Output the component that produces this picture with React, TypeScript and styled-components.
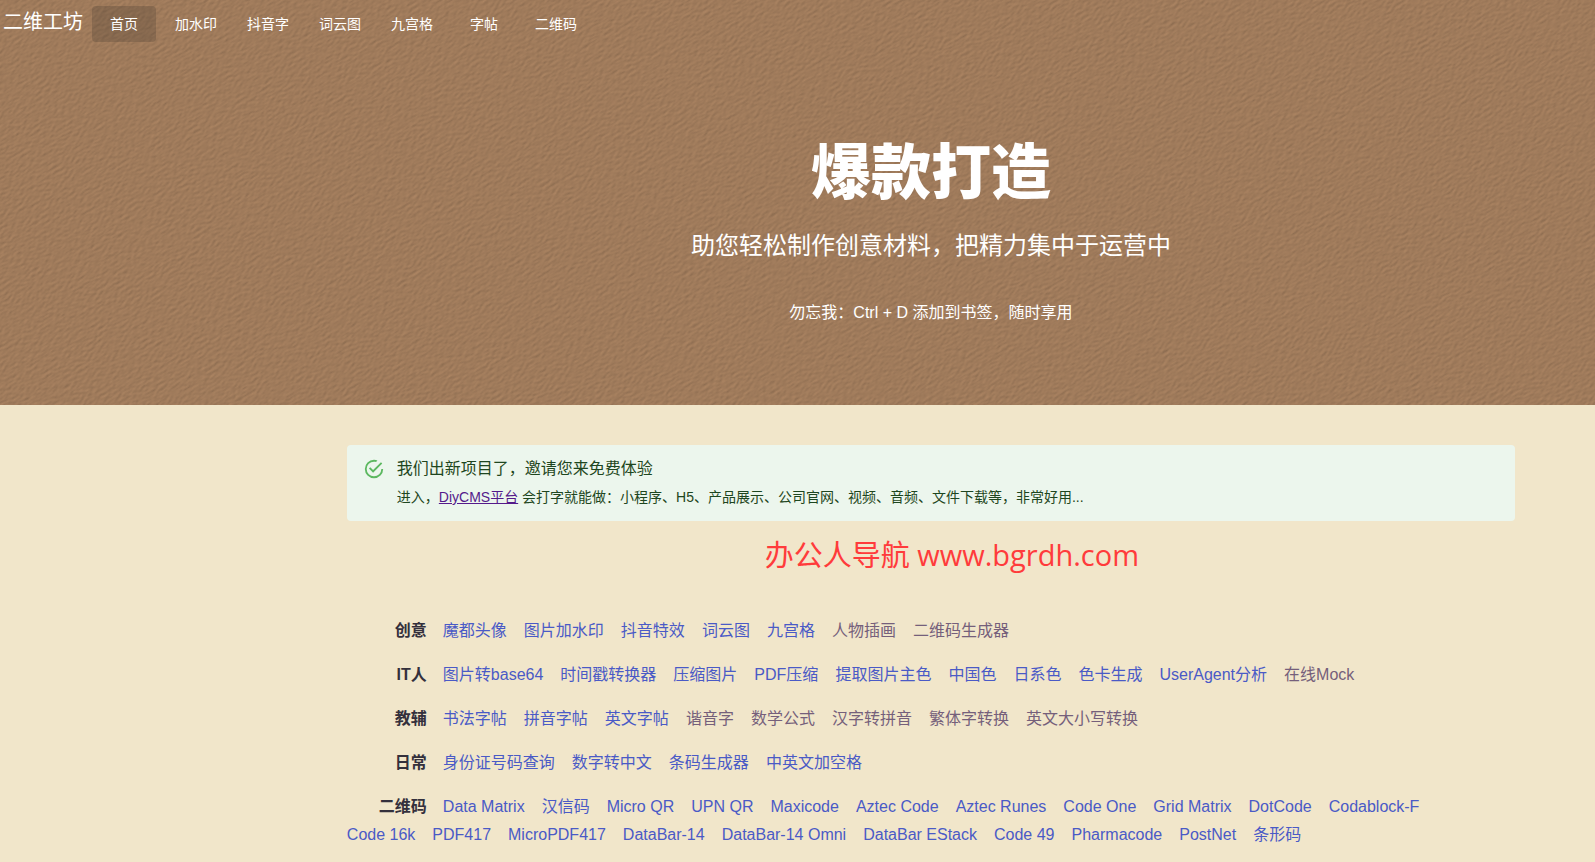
import React from 'react';
import styled, { createGlobalStyle } from 'styled-components';

const GlobalStyle = createGlobalStyle`
  * { box-sizing: border-box; }
  body {
    margin: 0;
    background: #f1e6ca;
    color: #34303c;
    font-family: "Liberation Sans", "Noto Sans CJK SC", sans-serif;
    font-size: 16px;
    line-height: 28px;
  }
`;

const Banner = styled.header`
  position: relative;
  background: #a07b5b;
  color: #fff;
  padding-bottom: 80px;
`;

const Texture = styled.svg`
  position: absolute;
  inset: 0;
  width: 100%;
  height: 100%;
`;

const TopBar = styled.div`
  position: relative;
  display: flex;
  align-items: flex-start;
  gap: 9px;
  padding: 6px 3px;
`;

const Brand = styled.span`
  font-size: 20px;
  line-height: 32px;
`;

const Nav = styled.nav`
  display: flex;
  gap: 8px;
`;

const NavButton = styled.button<{ $active?: boolean }>`
  min-width: 64px;
  height: 36px;
  padding: 0 8px;
  border: 0;
  border-radius: 4px;
  background: ${(p) => (p.$active ? 'rgba(60, 50, 40, 0.24)' : 'transparent')};
  color: inherit;
  font-family: inherit;
  font-size: 14px;
  font-weight: 400;
  line-height: 24px;
  cursor: pointer;
`;

const Column = styled.div`
  position: relative;
  margin-left: 16.6667%;
  padding: 0 80px 0 81px;
`;

const Hero = styled(Column)`
  padding-top: 90px;
  text-align: center;
`;

const HeroTitle = styled.h1`
  margin: 0 0 18px;
  font-size: 60px;
  font-weight: 900;
  line-height: 72px;
`;

const HeroLead = styled.p`
  margin: 0 0 37px;
  font-size: 24px;
  line-height: 36px;
`;

const HeroHint = styled.p`
  margin: 0;
  line-height: 24px;
`;

const Main = styled(Column).attrs({ as: 'main' })`
  padding-top: 40px;
`;

const Alert = styled.section`
  display: flex;
  gap: 12px;
  padding: 12px 16px 14px;
  border-radius: 4px;
  background: #ecf6ed;
  color: #1e4620;
`;

const AlertIcon = styled.svg`
  flex: none;
  width: 22px;
  height: 22px;
  margin-top: 1px;
  fill: #5cb860;
`;

const AlertTitle = styled.h2`
  margin: 0 0 6px;
  font-size: 16px;
  font-weight: 400;
  line-height: 24px;
`;

const AlertText = styled.p`
  margin: 0;
  font-size: 14px;
  line-height: 20px;
`;

const AlertLink = styled.a`
  color: #551a8b;
`;

const SiteMark = styled.p`
  margin: 14px 0 42px;
  padding-left: 42px;
  color: #ff3b3b;
  font-family: "Open Sans", "Noto Sans CJK SC", sans-serif;
  font-size: 29px;
  line-height: 40px;
  text-align: center;
`;

const Group = styled.section`
  display: flex;
  flex-wrap: wrap;
  margin-bottom: 16px;
`;

const GroupName = styled.h3`
  width: 80px;
  margin: 0 16px 0 0;
  font-size: 16px;
  font-weight: 700;
  line-height: 28px;
  text-align: right;
`;

const ToolLink = styled.a<{ $seen: boolean }>`
  margin-right: 17px;
  color: ${(p) => (p.$seen ? '#755f7b' : '#4a5ac6')};
  text-decoration: none;
`;

const navItems = ['首页', '加水印', '抖音字', '词云图', '九宫格', '字帖', '二维码'];

interface ToolGroup {
  name: string;
  fresh: string[];
  seen: string[];
}

const groups: ToolGroup[] = [
  {
    name: '创意',
    fresh: ['魔都头像', '图片加水印', '抖音特效', '词云图', '九宫格'],
    seen: ['人物插画', '二维码生成器'],
  },
  {
    name: 'IT人',
    fresh: ['图片转base64', '时间戳转换器', '压缩图片', 'PDF压缩', '提取图片主色', '中国色', '日系色', '色卡生成', 'UserAgent分析'],
    seen: ['在线Mock'],
  },
  {
    name: '教辅',
    fresh: ['书法字帖', '拼音字帖', '英文字帖'],
    seen: ['谐音字', '数学公式', '汉字转拼音', '繁体字转换', '英文大小写转换'],
  },
  {
    name: '日常',
    fresh: ['身份证号码查询', '数字转中文', '条码生成器', '中英文加空格'],
    seen: [],
  },
  {
    name: '二维码',
    fresh: [
      'Data Matrix', '汉信码', 'Micro QR', 'UPN QR', 'Maxicode', 'Aztec Code', 'Aztec Runes',
      'Code One', 'Grid Matrix', 'DotCode', 'Codablock-F', 'Code 16k', 'PDF417', 'MicroPDF417',
      'DataBar-14', 'DataBar-14 Omni', 'DataBar EStack', 'Code 49', 'Pharmacode', 'PostNet', '条形码',
    ],
    seen: [],
  },
];

const Leather = () => (
  <Texture aria-hidden="true">
    <defs>
      <filter id="leather" x="0" y="0" width="100%" height="100%" colorInterpolationFilters="sRGB">
        <feTurbulence type="fractalNoise" baseFrequency="0.2 0.38" numOctaves="2" seed="7" result="noise" />
        <feDiffuseLighting in="noise" surfaceScale="0.35" diffuseConstant="1.12" lightingColor="#a17c5c">
          <feDistantLight azimuth="260" elevation="62" />
        </feDiffuseLighting>
      </filter>
    </defs>
    <g transform="rotate(-32)">
      <rect x="-50%" y="-50%" width="160%" height="400%" filter="url(#leather)" />
    </g>
  </Texture>
);

export default function App() {
  return (
    <>
      <GlobalStyle />
      <Banner>
        <Leather />
        <TopBar>
          <Brand>二维工坊</Brand>
          <Nav>
            {navItems.map((item, i) => (
              <NavButton key={item} type="button" $active={i === 0}>{item}</NavButton>
            ))}
          </Nav>
        </TopBar>
        <Hero>
          <HeroTitle>爆款打造</HeroTitle>
          <HeroLead>助您轻松制作创意材料，把精力集中于运营中</HeroLead>
          <HeroHint>勿忘我：Ctrl + D 添加到书签，随时享用</HeroHint>
        </Hero>
      </Banner>
      <Main>
        <Alert>
          <AlertIcon viewBox="0 0 24 24" aria-hidden="true">
            <path d="M20,12A8,8 0 0,1 12,20A8,8 0 0,1 4,12A8,8 0 0,1 12,4C12.76,4 13.5,4.11 14.2,4.31L15.77,2.74C14.61,2.26 13.34,2 12,2A10,10 0 0,0 2,12A10,10 0 0,0 12,22A10,10 0 0,0 22,12H20M7.91,10.08L6.5,11.5L11,16L21,6L19.59,4.58L11,13.17L7.91,10.08Z" />
          </AlertIcon>
          <div>
            <AlertTitle>我们出新项目了，邀请您来免费体验</AlertTitle>
            <AlertText>
              进入，<AlertLink href="#diycms">DiyCMS平台</AlertLink> 会打字就能做：小程序、H5、产品展示、公司官网、视频、音频、文件下载等，非常好用...
            </AlertText>
          </div>
        </Alert>
        <SiteMark>办公人导航 www.bgrdh.com</SiteMark>
        {groups.map((group) => (
          <Group key={group.name}>
            <GroupName>{group.name}</GroupName>
            {group.fresh.map((tool) => (
              <ToolLink key={tool} href="#tool" $seen={false}>{tool}</ToolLink>
            ))}
            {group.seen.map((tool) => (
              <ToolLink key={tool} href="#tool" $seen>{tool}</ToolLink>
            ))}
          </Group>
        ))}
      </Main>
    </>
  );
}
